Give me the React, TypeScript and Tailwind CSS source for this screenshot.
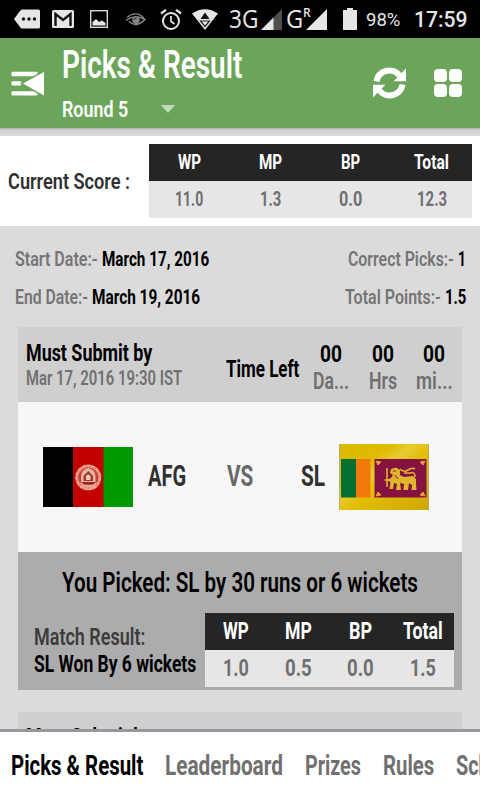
import React, { useLayoutEffect, useRef, useState } from "react";

interface IFit {
  text: string;
  className: string;
}

// condensed label: squeezes the text into the width given by className
const Fit: React.FC<IFit> = ({ text, className }) => {
  const outer = useRef<HTMLSpanElement>(null);
  const inner = useRef<HTMLSpanElement>(null);
  const [scale, setScale] = useState<number>(0.8);

  useLayoutEffect(() => {
    if (outer.current && inner.current) {
      setScale(outer.current.clientWidth / inner.current.offsetWidth);
    }
  }, [text]);

  return (
    <span ref={outer} className={`block shrink-0 whitespace-nowrap leading-none ${className}`}>
      <span ref={inner} className="inline-block origin-left align-top" style={{ transform: `scaleX(${scale})` }}>
        {text}
      </span>
    </span>
  );
};

const tableHeads = ["WP", "MP", "BP", "Total"];

const StatusBar: React.FC = () => (
  <div className="flex h-[38px] items-center bg-black pl-[14px] text-[#e6e6e6]">
    <svg className="h-[20px] w-[26px] shrink-0" viewBox="0 0 26 20">
      <path d="M8 0.5H24.500Q26 0.500 26 2V18Q26 19.500 24.500 19.500H8Q7 19.500 6 18L0 10L6 2Q7 0.500 8 0.500Z" fill="#e6e6e6" />
      <circle cx="9.500" cy="10" r="1.700" fill="#111" />
      <circle cx="15" cy="10" r="1.700" fill="#111" />
      <circle cx="20.500" cy="10" r="1.700" fill="#111" />
    </svg>
    <svg className="ml-[12px] h-[18px] w-[22px] shrink-0" viewBox="0 0 22 18">
      <rect width="22" height="18" rx="1.500" fill="#e6e6e6" />
      <path d="M3.500 16V4L11 10L18.500 4V16" fill="none" stroke="#111" strokeWidth="2.400" />
    </svg>
    <svg className="ml-[16px] h-[18px] w-[18px] shrink-0" viewBox="0 0 18 18">
      <rect x="0.700" y="0.700" width="16.600" height="16.600" fill="none" stroke="#d8d8d8" strokeWidth="1.400" />
      <path d="M2.500 15.500V12L6 9L9 12L12 10.500L15.500 13V15.500Z" fill="#e6e6e6" />
    </svg>
    <svg className="ml-[18px] mt-[2px] h-[14px] w-[20px] shrink-0" viewBox="0 0 20 14">
      <path d="M1 4.500Q10 -3 18 5" fill="none" stroke="#858585" strokeWidth="1.400" />
      <path d="M0 7.500Q9 0.500 19 6.500Q10 15.500 3 8.500" fill="none" stroke="#858585" strokeWidth="1.500" />
      <circle cx="10" cy="7.300" r="3.700" fill="#858585" />
      <path d="M8 7Q8.500 5 10.500 5" fill="none" stroke="#222" strokeWidth="1" />
    </svg>
    <svg className="ml-[14px] h-[21px] w-[22px] shrink-0" viewBox="0 0 22 21">
      <circle cx="11" cy="12" r="8" fill="none" stroke="#e6e6e6" strokeWidth="2" />
      <path d="M1 4.500L6 0.800M21 4.500L16 0.800" stroke="#e6e6e6" strokeWidth="2.200" />
      <path d="M11 7V12.500L14.500 15" fill="none" stroke="#e6e6e6" strokeWidth="1.700" />
    </svg>
    <svg className="ml-[10px] h-[21px] w-[26px] shrink-0" viewBox="0 0 26 21">
      <path d="M0 4.500Q13 -4 26 4.500L13 21Z" fill="#e6e6e6" />
      <path d="M13 3.500L17.500 10H8.500Z" fill="#111" />
      <path d="M8.500 12H17.500L13 17.500Z" fill="#e6e6e6" stroke="#222" strokeWidth="1.200" />
    </svg>
    <Fit text="3G" className="-mt-[1px] ml-[11px] w-[29px] font-['Open_Sans'] text-[25px] font-medium" />
    <svg className="ml-[3px] h-[21px] w-[21px] shrink-0" viewBox="0 0 21 21">
      <path d="M0 21L21 0V21Z" fill="#505050" />
      <path d="M0 21L12.500 8.500V21Z" fill="#e6e6e6" />
    </svg>
    <Fit text="G" className="-mt-[1px] ml-[4px] w-[17px] font-['Open_Sans'] text-[25px] font-medium" />
    <div className="relative ml-[3px] h-[21px] w-[21px] shrink-0">
      <svg className="h-[21px] w-[21px]" viewBox="0 0 21 21">
        <path d="M0 21L21 0V21Z" fill="#e6e6e6" />
      </svg>
      <span className="absolute -left-[3px] -top-[2px] font-['Open_Sans'] text-[12px] font-semibold leading-none">R</span>
    </div>
    <svg className="ml-[16px] h-[22px] w-[14px] shrink-0" viewBox="0 0 14 22">
      <path d="M4 0H10V2H14V22H0V2H4Z" fill="#e6e6e6" />
    </svg>
    <Fit text="98%" className="ml-[9px] mt-[2px] w-[34px] text-[18.500px] font-normal" />
    <Fit text="17:59" className="ml-[14px] mt-[1px] w-[54px] text-[21.500px] font-medium" />
  </div>
);

const Header: React.FC = () => (
  <div className="flex h-[90px] bg-[#6ba55a] text-white">
    <svg className="ml-[11px] mt-[33px] h-[26px] w-[34px] shrink-0" viewBox="0 0 34 26">
      <rect x="0.500" y="0.800" width="26" height="4.400" rx="1" fill="#fff" />
      <rect x="0.500" y="10.200" width="10" height="4.400" rx="1" fill="#fff" />
      <rect x="0.500" y="20.200" width="26" height="4.400" rx="1" fill="#fff" />
      <path d="M12 12.500L33 1V24.500Z" fill="#fff" stroke="#6ba55a" strokeWidth="3" paintOrder="stroke" />
    </svg>
    <div className="ml-[17px] w-[181px]">
      <Fit text="Picks & Result" className="mt-[7.500px] w-[180px] text-[38.500px] font-semibold" />
      <div className="mt-[14px] flex items-center">
        <Fit text="Round 5" className="w-[66px] text-[22.500px] font-semibold" />
        <div className="ml-[33px] h-0 w-0 border-x-[7px] border-t-[8px] border-x-transparent border-t-[#c2dabb]" />
      </div>
    </div>
    <svg className="ml-[129px] mt-[28px] h-[34px] w-[34px] shrink-0" viewBox="0 0 34 34">
      <path d="M4.500 15.500A13 13 0 0 1 27.500 9.500" fill="none" stroke="#fff" strokeWidth="6" />
      <path d="M34 2.500V15.300H21.500Z" fill="#fff" />
      <path d="M30.500 18.500A13 13 0 0 1 7.500 24.500" fill="none" stroke="#fff" strokeWidth="6" />
      <path d="M1 31.500V18.700H13.500Z" fill="#fff" />
    </svg>
    <div className="ml-[28px] mt-[31px] grid h-[28px] w-[28px] grid-cols-2 gap-[2px]">
      <div className="rounded-[4px] bg-white" />
      <div className="rounded-[4px] bg-white" />
      <div className="rounded-[4px] bg-white" />
      <div className="rounded-[4px] bg-white" />
    </div>
  </div>
);

interface IScoreTable {
  values: string[];
  headWidths: string[];
  valueWidths: string[];
  className: string;
}

const ScoreTable: React.FC<IScoreTable> = ({ values, headWidths, valueWidths, className }) => (
  <div className={`font-bold ${className}`}>
    <div className="grid h-[37px] grid-cols-4 items-center justify-items-center bg-[#252525] text-white">
      {tableHeads.map((head, i) => (
        <Fit key={head} text={head} className={headWidths[i]} />
      ))}
    </div>
    <div className="grid h-[37px] grid-cols-4 items-center justify-items-center bg-[#e6e6e6] text-[#707070]">
      {values.map((value, i) => (
        <Fit key={i} text={value} className={valueWidths[i]} />
      ))}
    </div>
  </div>
);

const AfgFlag: React.FC = () => (
  <svg className="h-[60px] w-[90px] shrink-0" viewBox="0 0 90 60">
    <rect width="30.500" height="60" fill="#000" />
    <rect x="30" width="31" height="60" fill="#c20000" />
    <rect x="60.500" width="29.500" height="60" fill="#009a00" />
    <circle cx="45.300" cy="30.500" r="11.500" fill="#cc3f30" stroke="#e08b78" strokeWidth="3" />
    <circle cx="45.300" cy="30.500" r="12" fill="none" stroke="#f0b9a4" strokeWidth="1.200" strokeDasharray="3 2" />
    <path d="M38 35V29Q39 22 45.300 21Q51.500 22 52.500 29V35Z" fill="#e6b49c" />
    <path d="M40.500 34V29L45.300 24L50 29V34Z" fill="#9c3a30" />
    <path d="M43 33V29Q45 26 47.500 29V33Z" fill="#eccab4" />
    <path d="M37 35L42 38H49L54 35L51 40.500H40Z" fill="#e9a78f" />
    <path d="M40 36H51" stroke="#7e2520" strokeWidth="1.600" />
  </svg>
);

const SlFlag: React.FC = () => (
  <svg className="h-[66px] w-[90px] shrink-0" viewBox="0 0 90 66">
    <defs>
      <linearGradient id="gold" x1="0" y1="0" x2="1" y2="1">
        <stop offset="0" stopColor="#d9b800" />
        <stop offset="0.300" stopColor="#e0bb00" />
        <stop offset="0.420" stopColor="#e8cb32" />
        <stop offset="0.550" stopColor="#e3be05" />
        <stop offset="1" stopColor="#d0a600" />
      </linearGradient>
    </defs>
    <rect width="90" height="66" fill="url(#gold)" />
    <path d="M0.400 0V66M89.600 0V66" stroke="#aaa28a" strokeWidth="0.800" />
    <rect x="2" y="15" width="15" height="38.500" fill="#04702f" />
    <rect x="17" y="15" width="14.500" height="38.500" fill="#f37a08" />
    <rect x="35.500" y="15" width="52" height="38.500" fill="#851240" />
    <path d="M37 17L42 18L39 21ZM86 17L81 18L84 21ZM37 52L42 51L39 48ZM86 52L81 51L84 48Z" fill="#e2a035" stroke="#e2a035" />
    {/* lion with the sword */}
    <path
      d="M52 25L57 23.500L61 26L61 31L65 33L74 32L77 35V40L77.500 46H72.500L73 41L70 39L69 46H64.500L65 40L61 39L62 46H57L58 40L55 39L54 45H50.500L51.500 38L47 36L52 34L54 31L51 29Z"
      fill="#dfb52d"
    />
    <path d="M48 24V43M45.500 36H50M61 25Q65 29 69 26T76 25M65 29H71Q76 27 76 33" fill="none" stroke="#dfb52d" strokeWidth="1.600" />
    <path d="M54 27H57M56 31L59 35" fill="none" stroke="#851240" strokeWidth="0.900" />
  </svg>
);

const TimeCell: React.FC<IFit> = ({ text, className }) => (
  <div className="flex w-[51.500px] flex-col items-center">
    <Fit text="00" className="w-[22px] text-[23.500px] text-black" />
    <Fit text={text} className={`mt-[3.500px] text-[23.500px] font-semibold text-[#707070] ${className}`} />
  </div>
);

const SubmitBar: React.FC = () => (
  <div className="flex h-[75px] shrink-0 bg-[#cfcfcf] pl-[8px] font-bold text-black">
    <div className="w-[199.500px] pt-[14.800px]">
      <Fit text="Must Submit by" className="w-[126px] text-[23px]" />
      <Fit text="Mar 17, 2016 19:30 IST" className="mt-[3.200px] w-[156px] text-[20.500px] font-semibold text-[#707070]" />
    </div>
    <Fit text="Time Left" className="mt-[30.500px] w-[73px] text-[23.500px]" />
    <div className="ml-[7px] flex pt-[15.500px]">
      <TimeCell text="Da..." className="w-[36px]" />
      <TimeCell text="Hrs" className="w-[28px]" />
      <TimeCell text="mi..." className="w-[37px]" />
    </div>
  </div>
);

const MatchCard: React.FC = () => (
  <div className="h-[363px] shrink-0">
    <SubmitBar />
    <div className="flex h-[150px] items-center bg-[#f7f7f7] font-bold text-[#303030]">
      <div className="w-[25px]" />
      <AfgFlag />
      <Fit text="AFG" className="ml-[15px] w-[38px] text-[29.500px]" />
      <Fit text="VS" className="ml-[41px] w-[26px] text-[29.500px] text-[#686868]" />
      <Fit text="SL" className="ml-[48px] w-[24px] text-[29.500px]" />
      <div className="ml-[14px]">
        <SlFlag />
      </div>
    </div>
    <div className="h-[138px] bg-[#acacac] font-bold text-black">
      <div className="flex h-[61px] items-center pl-[43.500px]">
        <Fit text="You Picked: SL by 30 runs or 6 wickets" className="w-[356px] text-[27.500px] font-semibold" />
      </div>
      <div className="flex">
        <div className="w-[187px] pl-[15.500px] pt-[12.500px]">
          <Fit text="Match Result:" className="w-[111px] text-[23.500px] font-semibold text-[#3c3c3c]" />
          <Fit text="SL Won By 6 wickets" className="mt-[4px] w-[162px] text-[23.500px]" />
        </div>
        <ScoreTable
          className="w-[249px] text-[23.500px]"
          values={["1.0", "0.5", "0.0", "1.5"]}
          headWidths={["w-[26px]", "w-[27px]", "w-[23px]", "w-[40px]"]}
          valueWidths={["w-[26px]", "w-[27px]", "w-[27px]", "w-[26px]"]}
        />
      </div>
    </div>
  </div>
);

const App: React.FC = () => {
  return (
    <div className="flex h-[800px] w-[480px] flex-col overflow-hidden bg-[#dbdbdb] font-['Roboto',sans-serif]">
      <StatusBar />
      <Header />
      <div className="h-[8px] shrink-0 bg-linear-to-b from-[#b5b5b5] via-[#d2d2d2] via-30% to-[#dcdcdc]" />

      <div className="flex h-[90px] shrink-0 items-center bg-white pl-[7.500px]">
        <Fit text="Current Score :" className="w-[122px] text-[22.500px] font-semibold text-[#303030]" />
        <ScoreTable
          className="ml-[19.500px] w-[323px] text-[20.500px]"
          values={["11.0", "1.3", "0.0", "12.3"]}
          headWidths={["w-[23px]", "w-[23px]", "w-[19px]", "w-[35px]"]}
          valueWidths={["w-[28px]", "w-[21px]", "w-[23px]", "w-[30px]"]}
        />
      </div>

      <div className="flex h-[101px] shrink-0 justify-between pl-[14.500px] pr-[14.500px] pt-[23px] text-[20.500px] font-bold text-black">
        <div className="flex flex-col gap-[17.500px]">
          <div className="flex gap-[4px]">
            <Fit text="Start Date:-" className="w-[83px] font-semibold text-[#757575]" />
            <Fit text="March 17, 2016" className="w-[107px]" />
          </div>
          <div className="flex gap-[4px]">
            <Fit text="End Date:-" className="w-[73px] font-semibold text-[#757575]" />
            <Fit text="March 19, 2016" className="w-[108px]" />
          </div>
        </div>
        <div className="flex flex-col items-end gap-[17.500px]">
          <div className="flex gap-[4px]">
            <Fit text="Correct Picks:-" className="w-[106px] font-semibold text-[#757575]" />
            <Fit text="1" className="w-[8px]" />
          </div>
          <div className="flex gap-[4px]">
            <Fit text="Total Points:-" className="w-[96px] font-semibold text-[#757575]" />
            <Fit text="1.5" className="w-[21px]" />
          </div>
        </div>
      </div>

      <div className="flex h-[402px] shrink-0 flex-col gap-[22px] overflow-hidden px-[18px]">
        <MatchCard />
        {/* next match, only its top edge is on screen */}
        <div className="h-[17px] shrink-0 overflow-hidden bg-[#cfcfcf] pl-[8px] pt-[14px] font-bold text-black">
          <Fit text="Must Submit by" className="w-[126px] text-[23px]" />
        </div>
      </div>

      <div className="flex h-[71px] shrink-0 items-center border-t-[3px] border-[#96989e] bg-white pl-[11px] text-[27.500px] font-bold text-[#707070]">
        <Fit text="Picks & Result" className="w-[132px] text-black" />
        <Fit text="Leaderboard" className="ml-[22px] w-[118px]" />
        <Fit text="Prizes" className="ml-[22px] w-[56px]" />
        <Fit text="Rules" className="ml-[22px] w-[51px]" />
        <Fit text="Schedule" className="ml-[22px] w-[83px]" />
      </div>
    </div>
  );
};

export default App;
